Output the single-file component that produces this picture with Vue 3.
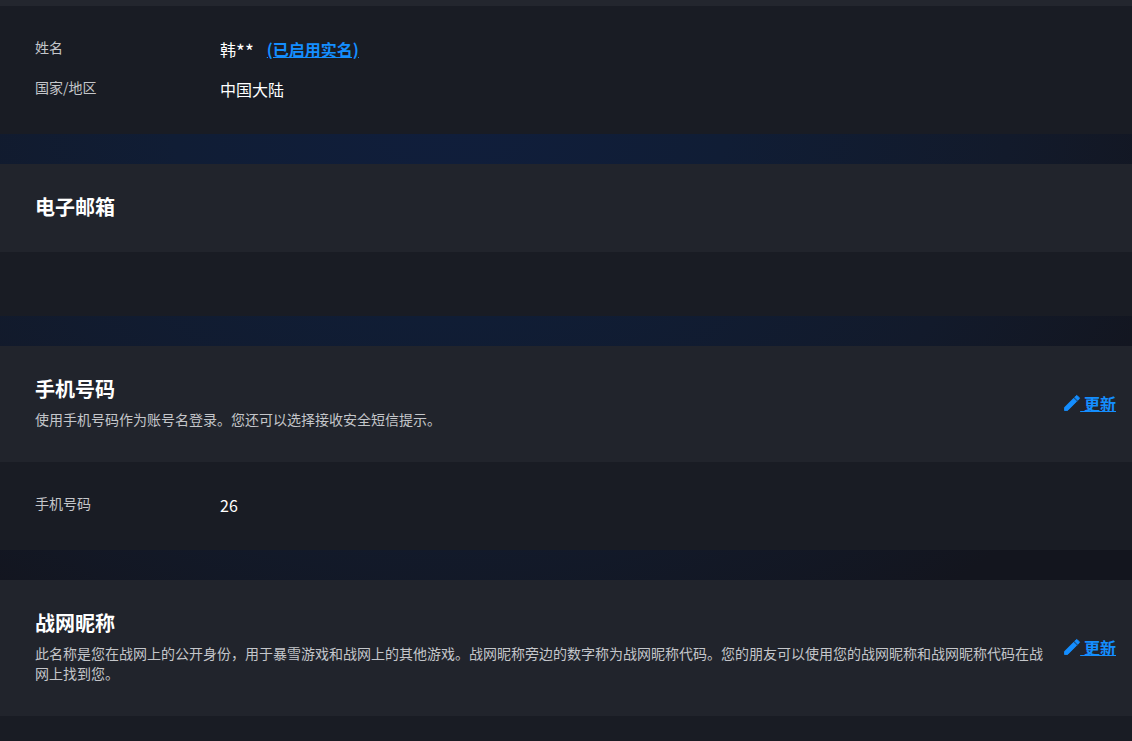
<template>
  <div class="page">
    <div class="strip"></div>

    <!-- 实名信息 -->
    <section class="block">
      <div class="body">
        <div class="row">
          <div class="label">姓名</div>
          <div class="value">韩<span class="stars">**</span><a class="verified" href="#">(已启用实名)</a></div>
        </div>
        <div class="row">
          <div class="label">国家/地区</div>
          <div class="value">中国大陆</div>
        </div>
      </div>
    </section>

    <section class="block">
      <div class="head">
        <div class="head-text">
          <h2>电子邮箱</h2>
        </div>
      </div>
      <div class="body empty"></div>
    </section>

    <section class="block">
      <div class="head">
        <div class="head-text">
          <h2>手机号码</h2>
          <p>使用手机号码作为账号名登录。您还可以选择接收安全短信提示。</p>
        </div>
        <a class="update" href="#">
          <svg viewBox="0 0 24 24" width="20" height="20"><path d="M3 17.25V21h3.75L17.81 9.94l-3.75-3.75L3 17.25zM20.71 7.04a1 1 0 0 0 0-1.41l-2.34-2.34a1 1 0 0 0-1.41 0l-1.83 1.83 3.75 3.75 1.83-1.83z" /></svg>
          <span> 更新</span>
        </a>
      </div>
      <div class="body">
        <div class="row">
          <div class="label">手机号码</div>
          <div class="value">26</div>
        </div>
      </div>
    </section>

    <section class="block">
      <div class="head">
        <div class="head-text">
          <h2>战网昵称</h2>
          <p>此名称是您在战网上的公开身份，用于暴雪游戏和战网上的其他游戏。战网昵称旁边的数字称为战网昵称代码。您的朋友可以使用您的战网昵称和战网昵称代码在战网上找到您。</p>
        </div>
        <a class="update" href="#">
          <svg viewBox="0 0 24 24" width="20" height="20"><path d="M3 17.25V21h3.75L17.81 9.94l-3.75-3.75L3 17.25zM20.71 7.04a1 1 0 0 0 0-1.41l-2.34-2.34a1 1 0 0 0-1.41 0l-1.83 1.83 3.75 3.75 1.83-1.83z" /></svg>
          <span> 更新</span>
        </a>
      </div>
      <div class="body empty"></div>
    </section>
  </div>
</template>

<script setup>
</script>

<style>
html,
body {
  margin: 0;
  background: #191c24;
}
</style>

<style scoped>
.page {
  height: 741px;
  overflow: hidden;
  background: #13151e radial-gradient(ellipse 800px 620px at 450px 100px, #101e3c 0%, #101d35 35%, #121a2b 70%, #13151e 100%);
  font-family: "Noto Sans CJK SC", "Liberation Sans", sans-serif;
  color: #fff;
}
.strip {
  height: 6px;
  background: #23262e;
}
.block {
  margin-bottom: 30px;
}
.head {
  display: flex;
  align-items: center;
  background: #21242c;
  padding: 28px 16px 30px 35px;
}
.head-text {
  flex: 1;
  padding-right: 17px;
}
h2 {
  margin: 0;
  font-size: 20px;
  line-height: 30px;
  font-weight: 700;
}
p {
  margin: 5px 0 3px;
  font-size: 14px;
  line-height: 20px;
  color: #c4c6ca;
}
.update {
  display: flex;
  align-items: center;
  color: #148eff;
  font-size: 16px;
  font-weight: 700;
}
.update svg {
  margin-right: -2px;
  fill: #148eff;
  stroke: #148eff;
  stroke-width: 1;
  stroke-linejoin: round;
}
.update span {
  white-space: pre;
  text-decoration: underline;
}
.body {
  background: #191c24;
  padding: 24px 35px;
}
.body.empty {
  height: 64px;
  padding: 0;
}
.row {
  display: flex;
  height: 40px;
}
.label {
  width: 185px;
  font-size: 14px;
  line-height: 34px;
  color: #c4c6ca;
}
.value {
  font-size: 16px;
  line-height: 38px;
}
.stars {
  font-size: 19px;
  line-height: 1;
  vertical-align: -3px;
}
.verified {
  margin-left: 13px;
  color: #148eff;
  font-weight: 700;
  text-decoration: underline;
}
</style>
